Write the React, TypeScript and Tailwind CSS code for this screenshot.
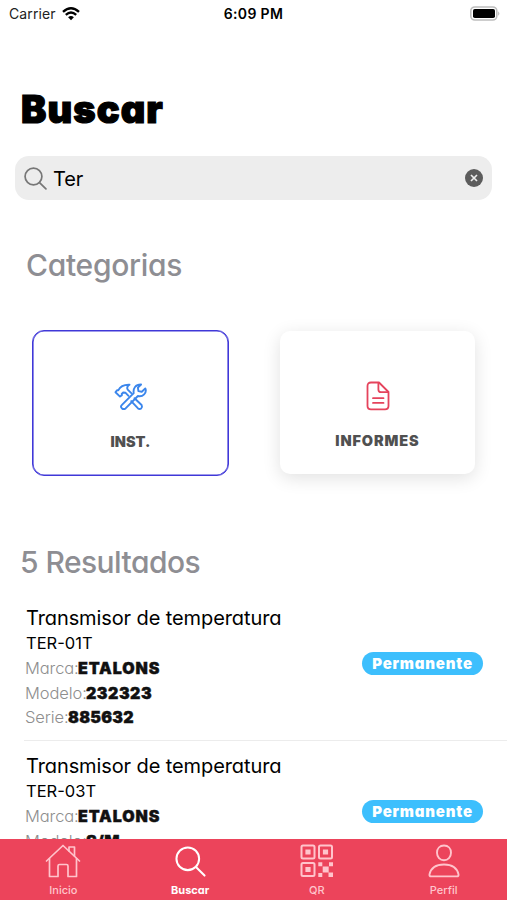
import React from "react";

function StatusBar() {
  return (
    <header className="grid h-7 shrink-0 grid-cols-3 items-center pl-[9px] pr-[6px] text-[14px] leading-none text-[#222] [font-feature-settings:normal]">
      <div className="flex items-center gap-[6px]">
        <span className="tracking-[0.1px]">Carrier</span>
        <svg width="18" height="14" viewBox="0 0 18 14" fill="none" stroke="#000" strokeWidth="2.4">
          <path d="M1 4.8Q9-2.1 17 4.8" />
          <path d="M3.8 7.8Q9 3.4 14.2 7.8" />
          <path d="M6.1 10.2Q9 7.8 11.9 10.2L9 13.2Z" fill="#000" stroke="none" />
        </svg>
      </div>
      <span className="-ml-[3px] whitespace-nowrap text-center font-semibold tracking-[0.35px] text-black">6:09 PM</span>
      <svg className="mb-[2px] justify-self-end" width="32" height="15" viewBox="0 0 32 15">
        <rect x="1.8" y="1" width="26" height="13" rx="4" fill="#fff" stroke="#bdbdbd" strokeWidth="1.6" />
        <rect x="4" y="3" width="22" height="9" rx="1.8" fill="#000" />
        <path d="M29.3 5.2Q31.4 7.5 29.3 9.8Z" fill="#aaa" />
      </svg>
    </header>
  );
}

function SearchIcon({ className, size, stroke }: { className?: string; size: number; stroke: number }) {
  return (
    <svg className={className} width={size} height={size} viewBox="0 0 32 32" fill="none" stroke="currentColor" strokeWidth={stroke} strokeLinecap="round">
      <circle cx="13.2" cy="13.2" r="11.7" />
      <path d="M21.6 21.6L30.5 30.5" />
    </svg>
  );
}

function ToolsIcon() {
  return (
    <svg width="34" height="28" viewBox="0 0 34 28" fill="none" stroke="#3b86ec" strokeWidth="1.9" strokeLinejoin="round" strokeLinecap="round">
      <path d="M14.5 12.8L11.6 9.8L9.2 9.5L7.7 11L7.9 12.2L6 13.6L1.5 9.2L3.2 7.2L4.4 7.2C6.2 3.2 9.4 1.5 15.5 1.7C13.4 3 12.6 4.6 13.7 6.6L17.3 10.1" />
      <path d="M20.5 15.2L27.6 22Q28.6 24 27.2 25.4Q25.5 26.7 23.8 25.2L17.2 18.1" />
      <path d="M7.7 22.2L19.7 10.2C18.9 5.3 21.5 1.4 27.1 1.5L23.9 4.7L24.4 8.1L27.8 8.7L31.3 5.4C33.2 9.9 28.8 14.2 23.9 13L11.6 25.4Q9.6 26.9 7.8 25.2Q6.2 23.5 7.7 22.2Z" />
    </svg>
  );
}

function DocumentIcon() {
  return (
    <svg width="24" height="30" viewBox="0 0 24 30" fill="none" stroke="#e5435c" strokeWidth="1.8" strokeLinejoin="round" strokeLinecap="round">
      <path d="M13 1.5H5Q1.5 1.5 1.5 5V25Q1.5 28.3 5 28.3H19Q22.5 28.3 22.5 25V11Z" />
      <path d="M12.4 1.8V8.4Q12.4 11.2 15.2 11.2H22" />
      <path d="M7 17.2H17.5M7 21.9H17.5" />
    </svg>
  );
}

function HomeIcon() {
  return (
    <svg width="36" height="34" viewBox="0 0 36 34" fill="none" stroke="currentColor" strokeWidth="1.7" strokeLinejoin="round" strokeLinecap="round">
      <path d="M1.5 17L18 1.5L34.5 17" />
      <path d="M4.5 14.5V32.5H13V22Q13 20.5 14.5 20.5H21.5Q23 20.5 23 22V32.5H31.5V14.5" />
      <path d="M24 7V3H29.5V12" />
    </svg>
  );
}

function QrIcon() {
  return (
    <svg width="34" height="34" viewBox="0 0 34 34" fill="none" stroke="currentColor" strokeWidth="2">
      <rect x="1.5" y="1.5" width="13" height="13" rx="1.5" />
      <rect x="19" y="1.5" width="13" height="13" rx="1.5" />
      <rect x="1.5" y="19" width="13" height="13" rx="1.5" />
      <path d="M5.4 5.4h5.2v5.2H5.4zM22.9 5.4h5.2v5.2h-5.2zM5.4 22.9h5.2v5.2H5.4zM18.3 18.3h4v4h-4zM29 18.3h4v4h-4zM22.7 22.4h6v6h-6zM18.3 29h4v4h-4zM28.5 28.5h4.5V33h-4.5z" fill="currentColor" stroke="none" />
    </svg>
  );
}

function PersonIcon() {
  return (
    <svg width="32" height="34" viewBox="0 0 32 34" fill="none" stroke="currentColor" strokeWidth="1.9" strokeLinejoin="round">
      <path d="M16 1.5C11.7 1.5 9 4.6 9 8.7C9 13 12 16.2 16 16.2S23 13 23 8.7C23 4.6 20.3 1.5 16 1.5Z" />
      <path d="M3 32.4Q1.2 32.4 1.5 30.4C3 23.5 9 20.5 16 20.5S29 23.5 30.5 30.4Q30.8 32.4 29 32.4Z" />
    </svg>
  );
}

function Detail({ label, value, labelClass, valueClass }: { label: string; value: string; labelClass: string; valueClass: string }) {
  return (
    <p className="flex h-[24.5px] items-center whitespace-nowrap text-[16.5px] leading-none">
      <span className={`font-light text-[#8e8e8e] ${labelClass}`}>{label}</span>
      <span className={`font-black text-[#111] [-webkit-text-stroke:0.4px_#111] ${valueClass}`}>{value}</span>
    </p>
  );
}

function Result({ code, modelo, serie }: { code: string; modelo: string; serie: string }) {
  return (
    <article className="ml-6 flex h-[148px] shrink-0 items-start justify-between border-b border-[#ececec] pr-6">
      <div className="pl-[1px] pt-[11px]">
        <h3 className="flex h-[27px] items-center whitespace-nowrap pl-[1px] text-[20px] leading-none tracking-[-0.1px] text-black">Transmisor de temperatura</h3>
        <p className="flex h-[25px] items-center pl-[1px] text-[16.5px] leading-none tracking-[0px] text-black">{code}</p>
        <Detail label="Marca:" value="ETALONS" labelClass="w-[53px] tracking-[-0.1px]" valueClass="text-[16px] tracking-[0.9px]" />
        <Detail label="Modelo:" value={modelo} labelClass="w-[61px] tracking-[-0.1px]" valueClass="text-[16px] tracking-[0.5px]" />
        <Detail label="Serie:" value={serie} labelClass="w-[43px] tracking-[-0.1px]" valueClass="text-[16px] tracking-[0.3px]" />
      </div>
      <span className="mt-[59px] flex h-[23px] w-[121px] items-center justify-center rounded-full bg-[#3dbffd] text-[15px] font-black leading-none tracking-[0.8px] text-white">Permanente</span>
    </article>
  );
}

function Tab({ label, active, children }: { label: string; active?: boolean; children: React.ReactNode }) {
  return (
    <div className={`flex flex-1 flex-col items-center ${active ? "font-bold text-white" : "font-medium text-[#ffc4cc]"}`}>
      <div className="flex h-[44px] items-center justify-center">{children}</div>
      <span className="text-[11px] leading-[14px]">{label}</span>
    </div>
  );
}

export default function App() {
  return (
    <div className="flex h-[900px] w-[507px] flex-col overflow-hidden bg-white font-['Inter','Liberation_Sans',sans-serif] [font-feature-settings:'cv11'_1,'ss03'_1]">
      <StatusBar />
      <main className="flex min-h-0 flex-1 flex-col overflow-hidden">
        <h1 className="mt-[58px] flex h-[46px] shrink-0 items-center pl-[21px] text-[38px] font-black leading-none tracking-[1.1px] text-black [-webkit-text-stroke:1.2px_#000]">Buscar</h1>
        <div className="ml-[15px] mr-[15px] mt-6 flex h-11 shrink-0 items-center rounded-[14px] bg-[#ededed] pl-[9px] pr-[9px]">
          <SearchIcon className="text-[#777]" size={23} stroke={2.4} />
          <span className="ml-[6px] mt-[2px] flex-1 text-[20px] leading-none tracking-[-0.1px] text-black">Ter</span>
          <svg width="18" height="18" viewBox="0 0 18 18">
            <circle cx="9" cy="9" r="9" fill="#5c5c5c" />
            <path d="M6 6L12 12M12 6L6 12" stroke="#ededed" strokeWidth="1.7" />
          </svg>
        </div>
        <h2 className="mt-[45px] flex h-10 shrink-0 items-center pl-[26px] text-[30px] font-medium leading-none tracking-[-0.3px] text-[#8e8e93]">Categorias</h2>
        <section className="mt-[45px] flex shrink-0 items-start pl-8">
          <div className="flex h-[146px] w-[197px] flex-col items-center rounded-[12px] border border-[#4038d8] pt-[52px] shadow-[inset_0_0_0_0.6px_#4038d8]">
            <ToolsIcon />
            <span className="mt-[23px] text-[14.5px] font-black leading-[16px] text-[#505050]">INST.</span>
          </div>
          <div className="ml-[51px] mt-[1px] flex h-[143px] w-[195px] flex-col items-center rounded-[10px] bg-white pt-[50px] shadow-[0_4px_18px_rgba(0,0,0,0.12)]">
            <DocumentIcon />
            <span className="mt-[22px] text-[14.5px] font-black leading-[16px] tracking-[0.9px] text-[#505050]">INFORMES</span>
          </div>
        </section>
        <h2 className="mt-[66px] flex h-10 shrink-0 items-center pl-[20px] text-[30px] font-medium leading-none tracking-[-0.55px] text-[#8e8e93]">5 Resultados</h2>
        <section className="mt-[11px] flex shrink-0 flex-col">
          <Result code="TER-01T" modelo="232323" serie="885632" />
          <Result code="TER-03T" modelo="S/M" serie="885633" />
        </section>
      </main>
      <nav className="flex h-[61px] shrink-0 bg-[#ec445b]">
        <Tab label="Inicio"><HomeIcon /></Tab>
        <Tab label="Buscar" active><SearchIcon size={31} stroke={2.1} /></Tab>
        <Tab label="QR"><QrIcon /></Tab>
        <Tab label="Perfil"><PersonIcon /></Tab>
      </nav>
    </div>
  );
}
